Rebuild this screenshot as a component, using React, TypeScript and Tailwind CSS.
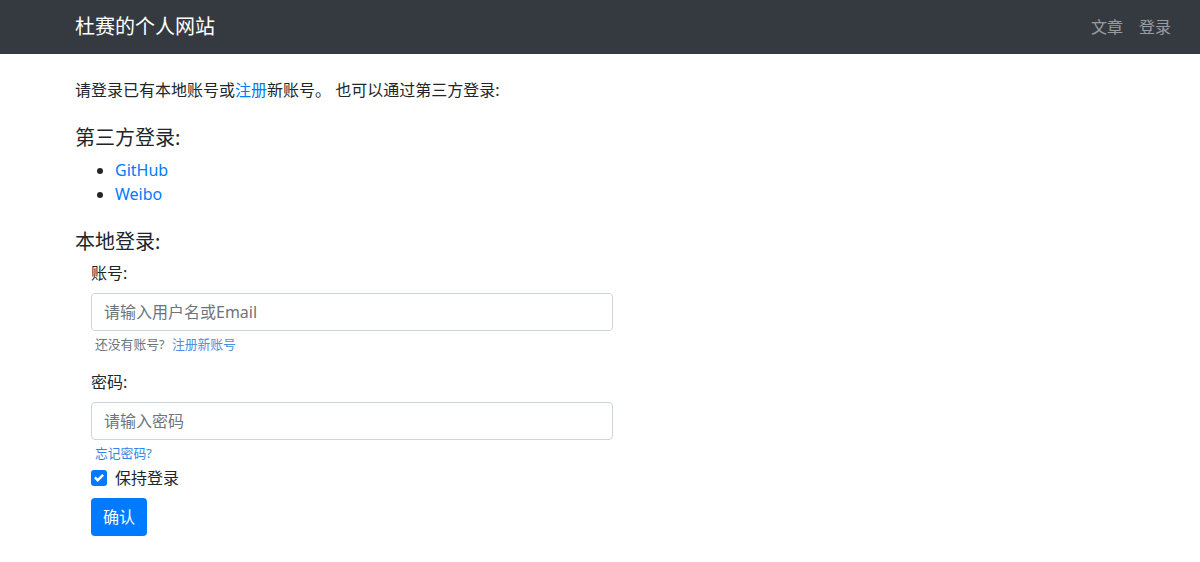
import React from "react";

const font = { fontFamily: '"Noto Sans", "Noto Sans CJK SC", sans-serif' };

const NavBar = () => (
  <nav className="h-[54px] bg-[#343a40] flex items-center justify-between pl-[75px] pr-[29px]">
    <a className="text-white text-[20px] leading-[30px]">杜赛的个人网站</a>
    <div className="flex items-center gap-4 text-[16px] text-white/50">
      <a>文章</a>
      <a>登录</a>
    </div>
  </nav>
);

const Field = ({ label, placeholder, type, help }: { label: string; placeholder: string; type: string; help: React.ReactNode }) => (
  <div>
    <label className="block text-[16px] leading-6 text-[#212529]">{label}</label>
    <input
      type={type}
      placeholder={placeholder}
      className="mt-2 block w-[522px] h-[38px] px-3 rounded border border-[#ced4da] text-[16px] text-[#495057] placeholder:text-[#6c757d] outline-none"
    />
    <div className="mt-1 text-[12.8px] leading-[19px] pl-1">{help}</div>
  </div>
);

export default function App() {
  return (
    <div className="min-h-[562px] bg-white text-[#212529]" style={font}>
      <NavBar />
      <main className="pl-[75px] pt-6">
        <p className="text-[16px] leading-6">
          请登录已有本地账号或<a className="text-[#007bff]">注册</a>新账号。 也可以通过第三方登录:
        </p>
        <h5 className="mt-6 text-[20px] leading-6">第三方登录:</h5>
        <ul className="mt-2 list-disc pl-10 text-[16px] leading-6">
          <li><a className="text-[#007bff]">GitHub</a></li>
          <li><a className="text-[#007bff]">Weibo</a></li>
        </ul>
        <h5 className="mt-6 text-[20px] leading-6">本地登录:</h5>
        <form className="pl-4 mt-[7px]">
          <Field
            label="账号:"
            type="text"
            placeholder="请输入用户名或Email"
            help={
              <span className="text-[#6c757d]">
                还没有账号? <a className="text-[#4a90e2] ml-1">注册新账号</a>
              </span>
            }
          />
          <div className="mt-4">
            <Field
              label="密码:"
              type="password"
              placeholder="请输入密码"
              help={<a className="text-[#2f86e8]">忘记密码?</a>}
            />
          </div>
          <div className="mt-[3px] flex items-center gap-2 h-6">
            <span className="w-4 h-4 rounded-[3px] bg-[#007bff] flex items-center justify-center">
              <svg width="10" height="10" viewBox="0 0 8 8">
                <path d="M6.564.75l-3.59 3.612-1.538-1.55L0 4.26l2.974 2.99L8 2.193z" fill="#fff" />
              </svg>
            </span>
            <span className="text-[16px]">保持登录</span>
          </div>
          <button type="button" className="mt-2 h-[38px] px-3 rounded bg-[#007bff] text-white text-[16px]">
            确认
          </button>
        </form>
      </main>
    </div>
  );
}
